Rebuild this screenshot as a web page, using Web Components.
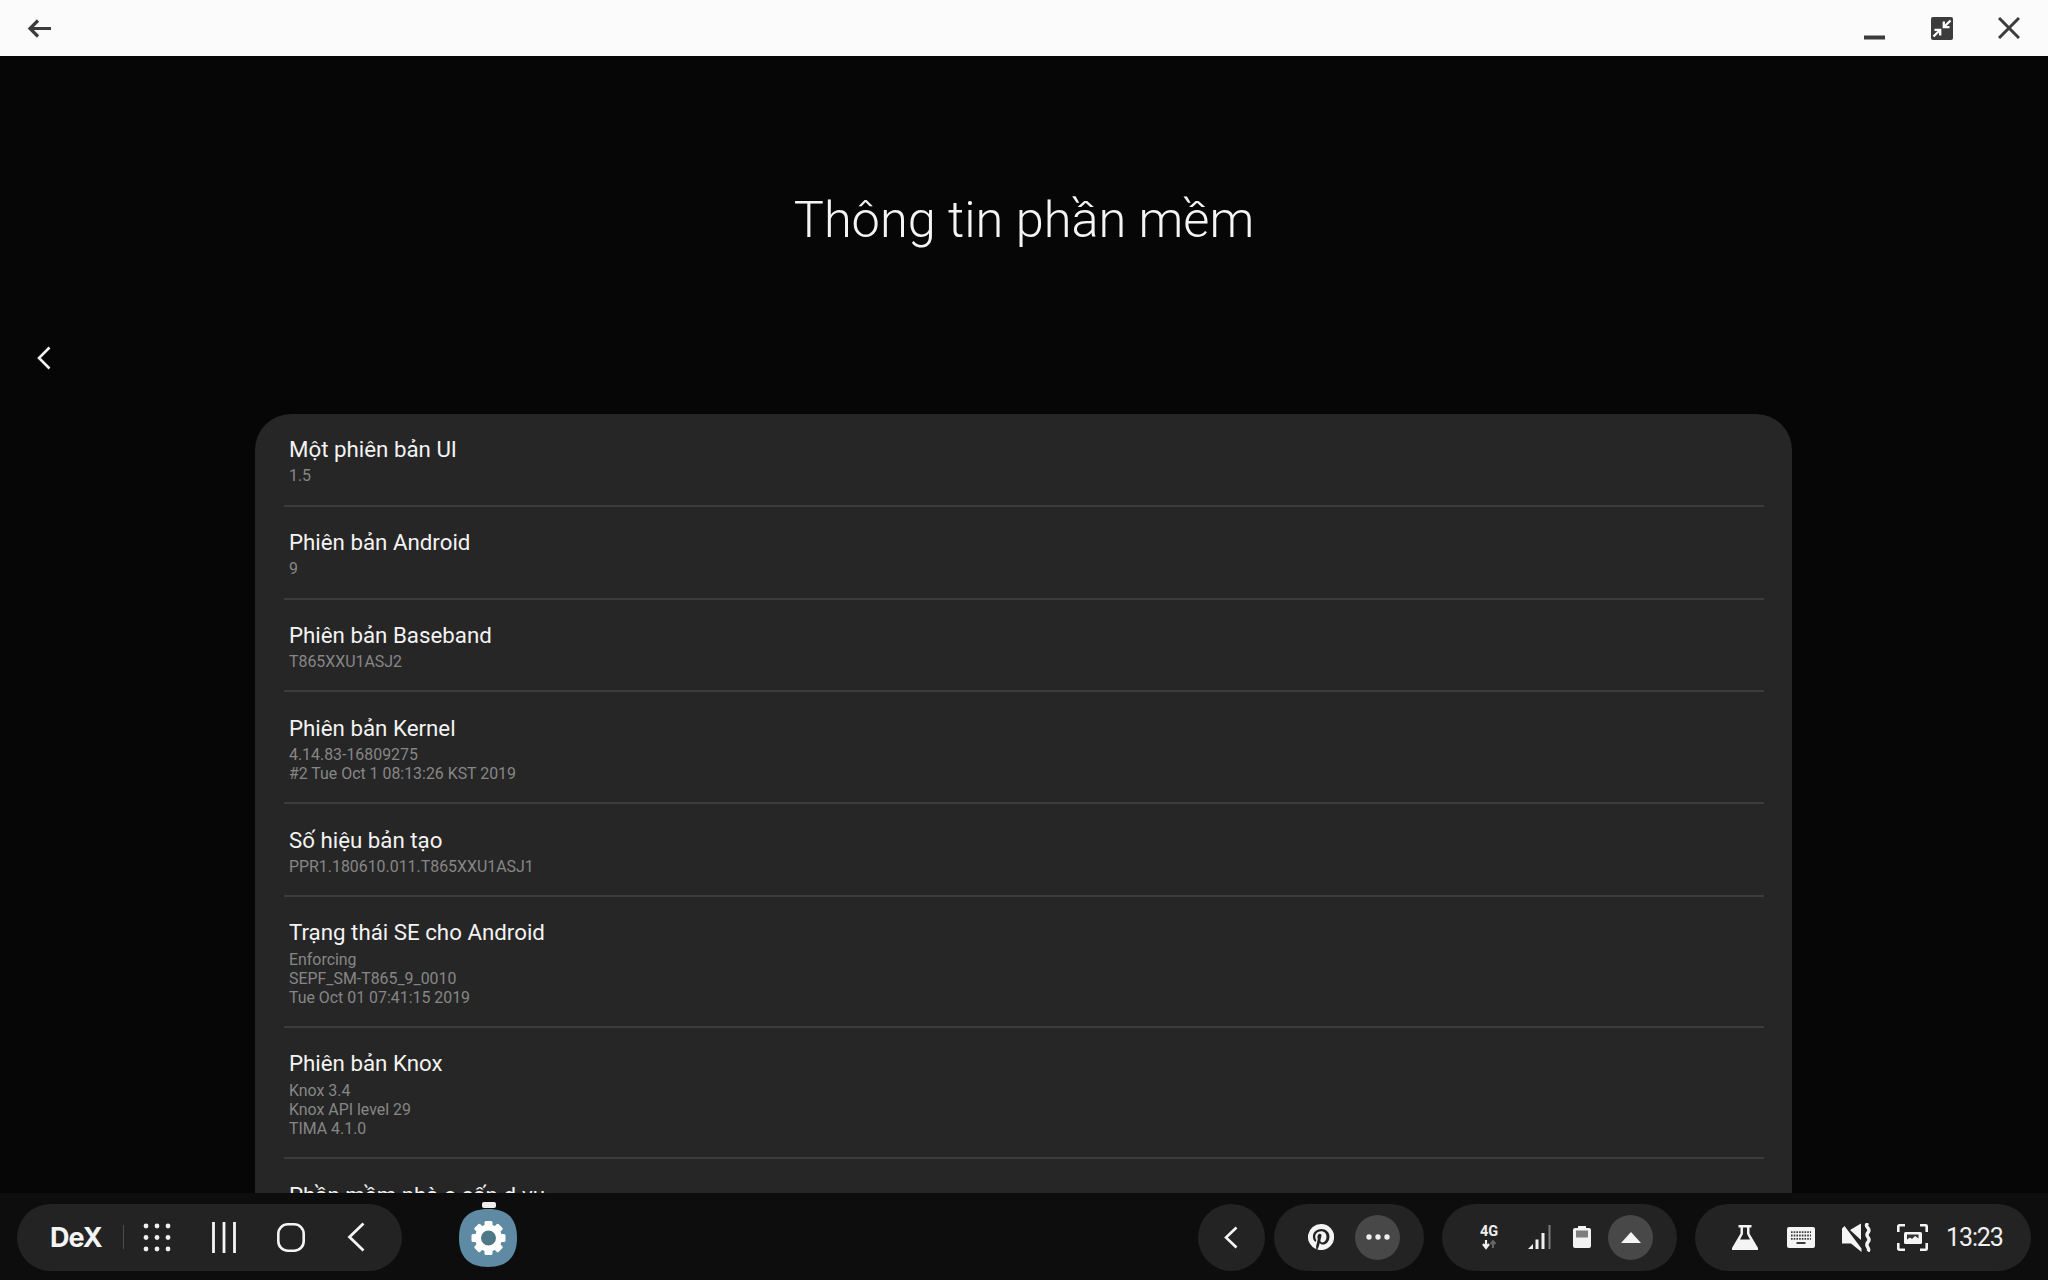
<!DOCTYPE html>
<html><head><meta charset="utf-8"><style>
html,body{margin:0;padding:0;background:#060606;height:100%;overflow:hidden;font-family:Roboto,"Noto Sans",sans-serif}
</style></head><body>
<dex-screen>
  <title-bar slot="top"></title-bar>
  <settings-page>
    <info-row t="Một phiên bản UI">1.5</info-row>
    <info-row t="Phiên bản Android">9</info-row>
    <info-row t="Phiên bản Baseband">T865XXU1ASJ2</info-row>
    <info-row t="Phiên bản Kernel">4.14.83-16809275<br>#2 Tue Oct 1 08:13:26 KST 2019</info-row>
    <info-row t="Số hiệu bản tạo">PPR1.180610.011.T865XXU1ASJ1</info-row>
    <info-row t="Trạng thái SE cho Android">Enforcing<br>SEPF_SM-T865_9_0010<br>Tue Oct 01 07:41:15 2019</info-row>
    <info-row t="Phiên bản Knox">Knox 3.4<br>Knox API level 29<br>TIMA 4.1.0</info-row>
    <info-row t="Phần mềm nhà c.cấp d.vụ" last>SAOTHERS</info-row>
  </settings-page>
  <task-bar slot="bottom"></task-bar>
</dex-screen>
<script>
function def(name, css, html){
  customElements.define(name, class extends HTMLElement{
    connectedCallback(){
      if(this.shadowRoot) return;
      const r=this.attachShadow({mode:'open'});
      r.innerHTML='<style>'+css+'</style>'+(typeof html==='function'?html(this):html);
    }
  });
}
def('dex-screen',`:host{display:flex;flex-direction:column;width:2048px;height:1280px;overflow:hidden}
 .m{flex:1;min-height:0;overflow:hidden}`,
 `<slot name="top"></slot><div class="m"><slot></slot></div><slot name="bottom"></slot>`);

def('title-bar',`:host{display:flex;align-items:center;height:56px;background:#fbfbfb;padding:0 0 0 27px;flex:none}
 svg{display:block;fill:none;stroke:#3c3c3c;stroke-width:3.2}
 .r{margin-left:auto;display:flex;align-items:center}`,
 `<svg width="24" height="19" viewBox="0 0 24 19"><path d="M24 9.500H3M11 1.500l-8 8 8 8"/></svg>
 <div class="r">
  <svg width="21" height="5" viewBox="0 0 21 5" style="margin-top:18px;margin-right:46px"><path d="M0 2.500h21" stroke-width="4"/></svg>
  <svg width="22" height="23" viewBox="0 0 22 23" style="margin-right:45px"><rect width="22" height="23" rx="2" fill="#3c3c3c" stroke="none"/><path d="M19.500 3.500l-6.500 6.500M12.800 4.500v5.700h5.700M2.500 19.500l6.500-6.500M9.200 18.500v-5.700H3.500" stroke="#fff" stroke-width="2.300"/></svg>
  <svg width="22" height="22" viewBox="0 0 22 22" style="margin-right:28px"><path d="M1 1l20 20M21 1L1 21" stroke-width="3"/></svg>
 </div>`);

def('settings-page',`:host{display:block;color:#fff}
 .head{height:265px;display:flex;align-items:center;justify-content:center;box-sizing:border-box}
 h1{margin:0;font:300 50.500px/1 Roboto,sans-serif;color:#f4f4f4;padding-top:64px}
 .nav{height:93px;padding:25px 0 0 37px;box-sizing:border-box}
 .nav svg{display:block;width:14px;height:24px;fill:none;stroke:#f0f0f0;stroke-width:2.6}
 .card{width:1537px;margin-left:255px;background:#262626;border-radius:36px 36px 0 0;padding:0 28px 0 29px;box-sizing:border-box}`,
 `<div class="head"><h1>Thông tin phần mềm</h1></div>
  <div class="nav"><svg viewBox="0 0 14 24"><path d="M12.500 1.500L2 12l10.500 10.500"/></svg></div>
  <div class="card"><slot></slot></div>`);

def('info-row',`:host{display:block;border-bottom:2px solid #3c3c3c;padding:20.200px 0 19.100px 5px;box-sizing:border-box}
 :host([last]){border-bottom:0}
 .t{font:400 22.300px/30px Roboto,sans-serif;color:#f3f3f3}
 .s{font:400 15.900px/19.200px Roboto,sans-serif;color:#868686;margin-top:2.300px}`,
 h=>`<div class="t">${h.getAttribute('t')}</div><div class="s"><slot></slot></div>`);

const teeth=[0,45,90,135,180,225,270,315].map(a=>`<rect x="-4" y="-17" width="8" height="7" rx="1.500" transform="rotate(${a})"/>`).join('');
def('task-bar',`:host{display:flex;align-items:center;height:87px;background:#0d0d0d;flex:none;padding:1px 17px 0;box-sizing:border-box}
 .p{display:flex;align-items:center;height:67px;background:#232323;border-radius:34px;box-sizing:border-box;flex:none}
 svg{display:block;flex:none}
 .dex{font:700 27px/1 Inter,"Liberation Sans",sans-serif;color:#f4f4f4;letter-spacing:-1px;width:52px;white-space:nowrap}
 .c{width:45px;height:45px;border-radius:50%;background:#484848;display:flex;align-items:center;justify-content:center;flex:none}
 .time{font:400 25px/1 Roboto,sans-serif;color:#f0f0f0;letter-spacing:-1.100px}
 .app{position:relative;flex:none;margin-left:57px;width:58px;height:58px;margin-top:2px}
 .dot{position:absolute;left:23px;top:-7px;width:14px;height:6px;border-radius:2px;background:#eee}
 .net{display:flex;flex-direction:column;width:22px;flex:none}
 .net span{font:700 14.500px/14px Roboto,sans-serif;color:#efefef;white-space:nowrap}`,
 `<div class="p" style="width:385px;padding-left:33px">
   <span class="dex">DeX</span>
   <span style="width:1px;height:24px;background:#4c4c4c;margin-left:21px;margin-right:19px;flex:none"></span>
   <svg width="28" height="29" viewBox="0 0 28 29" fill="#f0f0f0"><circle cx="3" cy="3" r="2.400"/><circle cx="14" cy="3" r="2.400"/><circle cx="25" cy="3" r="2.400"/><circle cx="3" cy="14.500" r="2.400"/><circle cx="14" cy="14.500" r="2.400"/><circle cx="25" cy="14.500" r="2.400"/><circle cx="3" cy="26" r="2.400"/><circle cx="14" cy="26" r="2.400"/><circle cx="25" cy="26" r="2.400"/></svg>
   <svg width="24" height="31" viewBox="0 0 24 31" style="margin-left:41px" stroke="#f4f4f4" stroke-width="2.800"><path d="M1.500 0v31M12 0v31M22.500 0v31"/></svg>
   <svg width="28" height="29" viewBox="0 0 28 29" style="margin-left:41px" fill="none" stroke="#f4f4f4" stroke-width="2.600"><rect x="1.300" y="1.300" width="25.400" height="26.400" rx="9.500"/></svg>
   <svg width="18" height="30" viewBox="0 0 18 30" style="margin-left:42px" fill="none" stroke="#f4f4f4" stroke-width="2.800"><path d="M16.500 1.500L2.500 15l14 13.500"/></svg>
  </div>
  <div class="app">
   <span class="dot"></span>
   <svg width="58" height="58" viewBox="0 0 58 58"><path d="M29 0C47 0 58 8 58 29c0 18-9 29-29 29S0 47 0 29C0 8 11 0 29 0z" fill="#5f8aa3"/>
    <g transform="translate(29.500 29)"><g fill="#fff">${teeth}</g><circle r="10.500" fill="#4e7888" stroke="#fff" stroke-width="6"/></g></svg>
  </div>
  <div class="p" style="width:67px;margin-left:681px;justify-content:center;padding-right:1px">
   <svg width="14" height="23" viewBox="0 0 14 23" fill="none" stroke="#f4f4f4" stroke-width="2.600"><path d="M12.500 1.500L2 11.500l10.500 10"/></svg>
  </div>
  <div class="p" style="width:150px;margin-left:9px;padding-left:34px">
   <svg width="26" height="26" viewBox="0 0 27 27"><path fill="#f4f4f4" fill-rule="evenodd" d="M13.500 0a13.500 13.500 0 0 0-4.900 26.100c-.1-1-.2-2.700 0-3.900l1.600-6.700s-.4-.8-.4-2c0-1.900 1.100-3.300 2.500-3.300 1.200 0 1.700.9 1.700 1.900 0 1.200-.8 2.900-1.100 4.500-.3 1.400.7 2.500 2 2.500 2.400 0 4.300-2.500 4.300-6.200 0-3.200-2.300-5.500-5.600-5.500-3.800 0-6.100 2.900-6.100 5.800 0 1.200.4 2.400 1 3.100.1.100.1.300.1.400l-.4 1.500c-.1.200-.2.300-.4.200-1.700-.8-2.700-3.200-2.700-5.200 0-4.200 3.100-8.100 8.900-8.100 4.700 0 8.300 3.300 8.300 7.800 0 4.600-2.900 8.400-7 8.400-1.400 0-2.700-.7-3.100-1.600l-.9 3.200c-.3 1.200-1.100 2.600-1.600 3.500A13.500 13.500 0 1 0 13.500 0z"/></svg>
   <div class="c" style="margin-left:21px"><svg width="24" height="6" viewBox="0 0 24 6" fill="#f0f0f0"><circle cx="3" cy="3" r="2.700"/><circle cx="12" cy="3" r="2.700"/><circle cx="21" cy="3" r="2.700"/></svg></div>
  </div>
  <div class="p" style="width:235px;margin-left:18px;padding-left:38px">
   <div class="net"><span>4G</span><svg width="18" height="10" viewBox="0 0 18 10" style="margin-top:1px"><path d="M6 0v6M3 4l3 4 3-4" stroke="#efefef" stroke-width="2.200" fill="none"/><path d="M13 8V2M10.500 4L13 1l2.500 3" stroke="#666" stroke-width="2" fill="none"/></svg></div>
   <svg width="23" height="24" viewBox="0 0 23 24" style="margin-left:26px"><path d="M0 24l5-5v5z" fill="#efefef"/><path d="M7.500 14.500h3V24h-3zM13.500 8h3v16h-3z" fill="#efefef"/><path d="M20.500 0h2v24h-2z" fill="#7c7c7c"/></svg>
   <svg width="18" height="22" viewBox="0 0 18 22" style="margin-left:22px"><path d="M5 0h8v2h3a2 2 0 0 1 2 2v16a2 2 0 0 1-2 2H2a2 2 0 0 1-2-2V4a2 2 0 0 1 2-2h3z" fill="#f2f2f2"/><rect x="3" y="4.500" width="12" height="7" fill="#7d7d7d"/></svg>
   <div class="c" style="margin-left:17px"><svg width="20" height="11" viewBox="0 0 20 11" fill="#f4f4f4"><path d="M10 0l10 11H0z"/></svg></div>
  </div>
  <div class="p" style="width:336px;margin-left:18px;padding-left:37px">
   <svg width="26" height="25" viewBox="0 0 26 25" fill="#f4f4f4"><path d="M6.500 0h13v2.500h-2V8.500L26 23v2H0v-2L8.500 8.500v-6h-2zM11 2.500v6.500L8 14.500h10L15 9V2.500z" fill-rule="evenodd"/></svg>
   <svg width="28" height="21" viewBox="0 0 28 21" style="margin-left:29px"><rect width="28" height="21" rx="2" fill="#f4f4f4"/><g stroke="#3a3a3a" stroke-width="1.800" stroke-dasharray="1.600 1.100" fill="none"><path d="M4 5.200h20M4 8.500h20M4 11.800h20"/></g><rect x="9.500" y="15" width="9" height="2" fill="#3a3a3a"/></svg>
   <svg width="30" height="29" viewBox="0 0 30 29" style="margin-left:27px"><path d="M0 5.500L2.500 3 19.500 25.500V29L9 20.500H0z" fill="#f4f4f4"/><path d="M8 7L19 .5V17z" fill="#f4f4f4"/><path d="M26 0c-5 4 4 5 0 9.500s4 5 0 9.500 3 6 0 9.500" fill="none" stroke="#f4f4f4" stroke-width="3.400"/></svg>
   <svg width="31" height="27" viewBox="0 0 31 27" style="margin-left:25px" fill="none" stroke="#f4f4f4" stroke-width="2.600"><path d="M1.300 8V2.300a1 1 0 0 1 1-1H8M23 1.300h5.700a1 1 0 0 1 1 1V8M29.700 19v5.700a1 1 0 0 1-1 1H23M8 25.700H2.300a1 1 0 0 1-1-1V19"/><rect x="7" y="8" width="18" height="12" rx="1.500" fill="#f4f4f4" stroke="none"/><path d="M10 15.500l3-2 2 1.500 3-3 3.500 2.500V10.500H10z" fill="#333" stroke="none"/></svg>
   <span class="time" style="margin-left:18px">13:23</span>
  </div>`);
</script>
</body></html>
